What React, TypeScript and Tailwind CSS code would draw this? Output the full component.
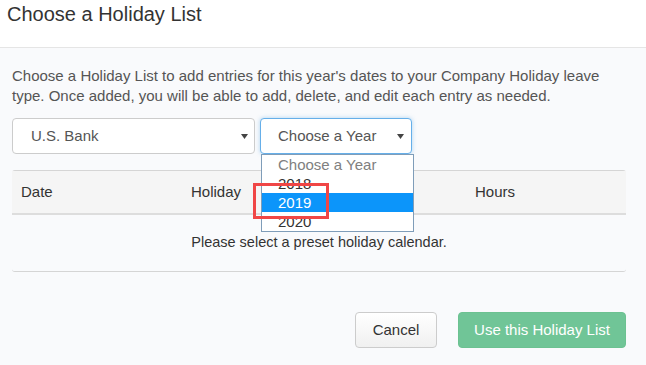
const years = ["Choose a Year", "2018", "2019", "2020"];

function Caret() {
  return (
    <svg width="7" height="5" viewBox="0 0 7 5" className="shrink-0">
      <path d="M0 0h7L3.5 5z" fill="#444" />
    </svg>
  );
}

export default function App() {
  return (
    <div className="w-[646px] h-[365px] overflow-hidden bg-[#f9fafc] font-['Liberation_Sans',Arial,sans-serif] text-[#555]">
      <div className="h-[48px] bg-white border-b border-[#e5e5e5] pl-[7px]">
        <h1 className="text-[20px] leading-[28px] text-[#333]">Choose a Holiday List</h1>
      </div>

      <div className="pl-[12px] pr-[20px] pt-[18px]">
        <p className="text-[15px] leading-[20px]">
          Choose a Holiday List to add entries for this year's dates to your Company Holiday leave
          type. Once added, you will be able to add, delete, and edit each entry as needed.
        </p>

        <div className="mt-[12px] flex gap-[5px]">
          <div className="w-[243px] h-[36px] bg-white border border-[#ccc] rounded-[4px] flex items-center justify-between pl-[18px] pr-[6px] text-[15px] text-[#555]">
            <span>U.S. Bank</span>
            <Caret />
          </div>

          <div className="relative">
            <div className="w-[152px] h-[36px] bg-white border border-[#66afe9] rounded-[4px] flex items-center justify-between pl-[17px] pr-[7px] text-[15px] text-[#555] shadow-[0_0_4px_rgba(102,175,233,0.5)]">
              <span>Choose a Year</span>
              <Caret />
            </div>

            <ul className="absolute left-[1px] top-[36px] z-10 w-[153px] bg-white border border-[#7f9db9] text-[15px] leading-[19px]">
              {years.map((y) => (
                <li
                  key={y}
                  className={
                    y === "2019"
                      ? "h-[19px] pl-[16px] bg-[#0c95fa] text-white"
                      : y === "Choose a Year"
                        ? "h-[19px] pl-[16px] text-[#808080]"
                        : "h-[19px] pl-[16px] text-[#333]"
                  }
                >
                  {y}
                </li>
              ))}
            </ul>

            <div className="absolute left-[-7px] top-[65px] z-20 w-[76px] h-[36px] border-[3px] border-[#f04646]" />
          </div>
        </div>

        <div className="mt-[16px] border-t border-b border-[#d5d5d5] rounded-[3px]">
          <div className="h-[44px] bg-[#f5f5f5] border-b-2 border-[#ddd] flex items-center text-[15px] text-[#333]">
            <div className="w-[170px] pl-[9px]">Date</div>
            <div className="w-[284px] pl-[9px]">Holiday</div>
            <div className="pl-[9px]">Hours</div>
          </div>
          <div className="h-[56px] flex items-center justify-center text-[14.5px] text-[#333]">
            Please select a preset holiday calendar.
          </div>
        </div>

        <div className="mt-[40px] flex justify-end gap-[21px]">
          <button className="w-[82px] h-[36px] rounded-[4px] border border-[#ccc] bg-gradient-to-b from-white to-[#f0f0f0] text-[15px] text-[#333]">
            Cancel
          </button>
          <button className="w-[168px] h-[36px] rounded-[4px] border border-[#6cc291] bg-[#70c597] text-[15px] text-white">
            Use this Holiday List
          </button>
        </div>
      </div>
    </div>
  );
}
